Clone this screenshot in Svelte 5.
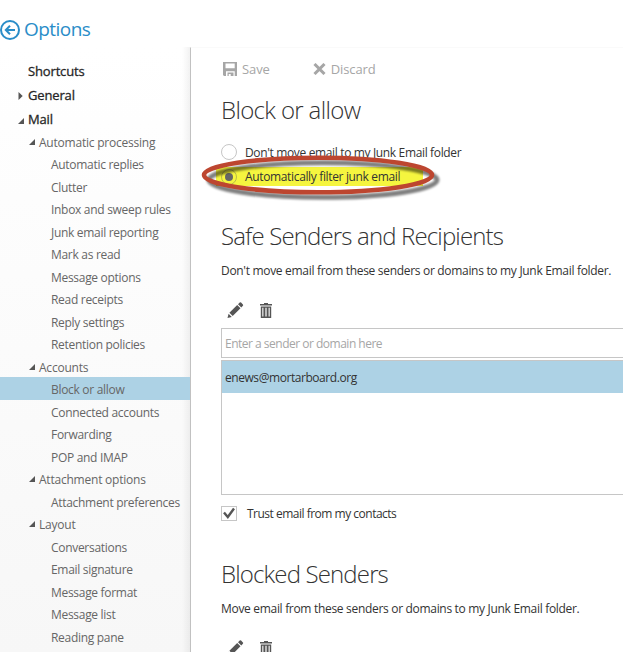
<script lang="ts">
  type Level = 'top' | 'group' | 'item';
  type NavEntry = { label: string; level: Level; arrow?: 'open' | 'closed' };

  const nav: NavEntry[] = [
    { label: 'Shortcuts', level: 'top' },
    { label: 'General', level: 'top', arrow: 'closed' },
    { label: 'Mail', level: 'top', arrow: 'open' },
    { label: 'Automatic processing', level: 'group', arrow: 'open' },
    { label: 'Automatic replies', level: 'item' },
    { label: 'Clutter', level: 'item' },
    { label: 'Inbox and sweep rules', level: 'item' },
    { label: 'Junk email reporting', level: 'item' },
    { label: 'Mark as read', level: 'item' },
    { label: 'Message options', level: 'item' },
    { label: 'Read receipts', level: 'item' },
    { label: 'Reply settings', level: 'item' },
    { label: 'Retention policies', level: 'item' },
    { label: 'Accounts', level: 'group', arrow: 'open' },
    { label: 'Block or allow', level: 'item' },
    { label: 'Connected accounts', level: 'item' },
    { label: 'Forwarding', level: 'item' },
    { label: 'POP and IMAP', level: 'item' },
    { label: 'Attachment options', level: 'group', arrow: 'open' },
    { label: 'Attachment preferences', level: 'item' },
    { label: 'Layout', level: 'group', arrow: 'open' },
    { label: 'Conversations', level: 'item' },
    { label: 'Email signature', level: 'item' },
    { label: 'Message format', level: 'item' },
    { label: 'Message list', level: 'item' },
    { label: 'Reading pane', level: 'item' },
  ];

  let current = $state('Block or allow');
  let filterMode = $state('filter');
  let trustContacts = $state(true);
  let newSender = $state('');

  const safeSenders = ['enews@mortarboard.org'];
</script>

{#snippet editTools()}
  <div class="tools">
    <button aria-label="Edit">
      <svg width="17" height="17" viewBox="0 0 17 17">
        <path d="M0.5 16 L1.6 11.7 L4.8 14.9 Z M2.4 10.8 L10.2 3 L13.5 6.3 L5.7 14.1 Z M11 2.2 L12.7 0.6 Q13.4 0 14.1 0.6 L15.9 2.4 Q16.5 3.1 15.9 3.8 L14.3 5.5 Z" />
      </svg>
    </button>
    <button aria-label="Delete">
      <svg width="12" height="15" viewBox="0 0 12 15">
        <path fill-rule="evenodd" d="M0 1 H4 V0 H8 V1 H12 V2.5 H0 Z M0.8 3.5 H11.2 V15 H0.8 Z M2.3 4.7 V13.5 H3.4 V4.7 Z M5.4 4.7 V13.5 H6.6 V4.7 Z M8.6 4.7 V13.5 H9.7 V4.7 Z" />
      </svg>
    </button>
  </div>
{/snippet}

<div class="page">
  <header>
    <svg class="back" width="20" height="20" viewBox="0 0 20 20">
      <circle cx="10" cy="10" r="9" />
      <path d="M15 10 H6 M10 5.7 L5.8 10 L10 14.3" />
    </svg>
    <span>Options</span>
  </header>

  <div class="body">
    <nav>
      {#each nav as entry (entry.label)}
        <button
          class="entry {entry.level}"
          class:selected={current === entry.label}
          onclick={() => (current = entry.label)}
        >
          <span class="arrow">
            {#if entry.arrow === 'open'}
              <svg width="6" height="6" viewBox="0 0 6 6"><path d="M6 0 V6 H0 Z" /></svg>
            {:else if entry.arrow === 'closed'}
              <svg width="5" height="8" viewBox="0 0 5 8"><path d="M0.5 0 L4.7 4 L0.5 8 Z" /></svg>
            {/if}
          </span>
          <span class="label">{entry.label}</span>
        </button>
      {/each}
    </nav>

    <main>
      <div class="commands">
        <button class="save">
          <svg width="14" height="14" viewBox="0 0 14 14">
            <path fill-rule="evenodd" d="M0 0 H14 V14 H11.7 V9.3 H3 V14 H1 L0 13 Z M2.5 1.5 V6.3 H11.7 V1.5 Z M4.5 10.5 H10.5 V14 H7.7 V12 H5.7 V14 H4.5 Z" />
          </svg>
          Save
        </button>
        <button>
          <svg width="13" height="12" viewBox="0 0 13 12">
            <path class="cross" d="M1.5 1 L11.5 11 M11.5 1 L1.5 11" />
          </svg>
          Discard
        </button>
      </div>

      <h2>Block or allow</h2>
      <div class="choices">
        <label class="choice">
          <input type="radio" bind:group={filterMode} value="none" />
          <span class="dot"></span>
          <span class="text">Don't move email to my Junk Email folder</span>
        </label>
        <label class="choice marked">
          <input type="radio" bind:group={filterMode} value="filter" />
          <span class="dot"></span>
          <span class="text">Automatically filter junk email</span>
        </label>
        <svg class="ring" width="250" height="56" viewBox="0 0 250 56">
          <defs>
            <filter id="soft" x="-10%" y="-30%" width="120%" height="160%">
              <feGaussianBlur stdDeviation="1.3" />
            </filter>
          </defs>
          <ellipse class="shade" cx="123" cy="28" rx="114" ry="17.3" filter="url(#soft)" />
          <ellipse class="line" cx="118" cy="23" rx="114" ry="17.3" />
        </svg>
      </div>

      <h2 class="safe">Safe Senders and Recipients</h2>
      <p>Don't move email from these senders or domains to my Junk Email folder.</p>
      {@render editTools()}
      <input class="sender" placeholder="Enter a sender or domain here" bind:value={newSender} />
      <ul>
        {#each safeSenders as sender}
          <li>{sender}</li>
        {/each}
      </ul>
      <label class="trust">
        <input type="checkbox" bind:checked={trustContacts} />
        <span class="box">
          {#if trustContacts}
            <svg width="12" height="12" viewBox="0 0 12 12"><path d="M1 5.5 L4.8 10 L11 1.5" /></svg>
          {/if}
        </span>
        <span class="text">Trust email from my contacts</span>
      </label>

      <h2 class="blocked">Blocked Senders</h2>
      <p>Move email from these senders or domains to my Junk Email folder.</p>
      {@render editTools()}
    </main>
  </div>
</div>

<style>
  :global(body) {
    overflow: hidden;
    background: #fff;
  }

  .page {
    width: 623px;
    height: 652px;
    overflow: hidden;
    display: flex;
    flex-direction: column;
    font-family: 'Open Sans', 'Noto Sans', sans-serif;
    font-size: 12px;
    color: #333;
  }

  button {
    padding: 0;
    border: 0;
    background: none;
    font: inherit;
    color: inherit;
    text-align: left;
  }

  header {
    flex: none;
    height: 47px;
    box-sizing: border-box;
    padding-top: 15px;
    display: flex;
    align-items: flex-start;
    gap: 4px;
    color: #2a8dc8;
    font-size: 19px;
    line-height: 28px;
    letter-spacing: -0.55px;
  }

  .back {
    margin-top: 5px;
    fill: none;
    stroke: #2a8dc8;
    stroke-width: 2;
  }

  .body {
    flex: 1;
    min-height: 0;
    display: flex;
  }

  nav {
    width: 190px;
    flex: none;
    padding-top: 9.6px;
    box-sizing: border-box;
    background:
      linear-gradient(to left, rgba(0, 0, 0, 0.05), transparent 8px),
      linear-gradient(#fff, #f7f7f7);
    overflow: hidden;
  }

  .entry {
    display: flex;
    width: 100%;
    height: 22.5px;
    line-height: 26px;
    color: #666;
    letter-spacing: -0.3px;
  }

  .group {
    letter-spacing: -0.22px;
  }

  .top {
    height: 24.4px;
    line-height: 28px;
    font-size: 13px;
    color: #262626;
    letter-spacing: -0.15px;
    -webkit-text-stroke: 0.3px #262626;
  }

  .selected {
    background: #add2e5;
  }

  .arrow {
    flex: none;
    width: 39px;
    box-sizing: border-box;
    padding-left: 29px;
    fill: #555;
  }

  .top .arrow {
    width: 28px;
    padding-left: 18px;
  }

  .item .arrow {
    width: 51px;
  }

  .arrow svg {
    vertical-align: 2px;
  }

  .top .arrow svg {
    vertical-align: 0;
  }

  .label {
    white-space: nowrap;
  }

  main {
    flex: 1;
    min-width: 0;
    padding: 11px 0 0 30px;
    border-top: 1px solid #fafafa;
    border-left: 1px solid #c1c1c1;
    box-sizing: border-box;
    white-space: nowrap;
  }

  .commands {
    display: flex;
    gap: 43px;
    height: 20px;
    font-size: 13px;
    color: #a6a6a6;
    padding-left: 2px;
  }

  .commands button {
    display: flex;
    align-items: center;
    gap: 5px;
    letter-spacing: -0.1px;
  }

  .commands svg {
    fill: #a6a6a6;
  }

  .cross {
    stroke: #a6a6a6;
    stroke-width: 3;
  }

  h2 {
    margin: 14px 0 0;
    font-size: 24px;
    line-height: 34px;
    font-weight: 300;
    letter-spacing: -0.85px;
    color: #333;
  }

  .commands + h2 {
    letter-spacing: -0.65px;
  }

  .choices {
    position: relative;
    margin-top: 13px;
  }

  .choice {
    display: flex;
    align-items: center;
    height: 24px;
  }

  input[type='radio'],
  input[type='checkbox'] {
    display: none;
  }

  .dot {
    width: 14px;
    height: 14px;
    border: 1px solid #c6c6c6;
    border-radius: 50%;
    margin-right: 8px;
    display: grid;
    place-items: center;
  }

  input:checked + .dot::after {
    content: '';
    width: 8px;
    height: 8px;
    border-radius: 50%;
    background: #666;
  }

  .marked {
    width: 207px;
    height: 19px;
    margin: 3px 0 0 -5px;
    padding-left: 5px;
    box-sizing: border-box;
    background: #f5f53f;
  }

  .marked .dot {
    border-color: #b9b94a;
  }

  .choice .text {
    letter-spacing: -0.35px;
  }

  .trust .text {
    letter-spacing: -0.5px;
  }

  .ring {
    position: absolute;
    left: -21px;
    top: 12px;
    fill: none;
    pointer-events: none;
  }

  .line {
    stroke: #bd4630;
    stroke-width: 4.6;
  }

  .shade {
    stroke: rgba(0, 0, 0, 0.5);
    stroke-width: 5;
  }

  .safe {
    margin-top: 33px;
  }

  p {
    margin: 9px 0 0;
    line-height: 18px;
    letter-spacing: -0.31px;
  }

  .tools {
    display: flex;
    align-items: center;
    gap: 16px;
    height: 17px;
    margin: 22px 0 0 6px;
    fill: #555;
  }

  .tools button {
    display: flex;
  }

  .sender {
    display: block;
    width: 420px;
    height: 30px;
    box-sizing: border-box;
    margin-top: 9px;
    padding: 0 3px;
    border: 1px solid #c6c6c6;
    font: inherit;
    letter-spacing: -0.5px;
  }

  .sender::placeholder {
    color: #a6a6a6;
  }

  ul {
    width: 420px;
    height: 135px;
    box-sizing: border-box;
    margin: 2px 0 0;
    padding: 0;
    list-style: none;
    border: 1px solid #c6c6c6;
  }

  li {
    height: 32px;
    line-height: 34px;
    padding-left: 3px;
    letter-spacing: -0.44px;
    background: #add2e5;
  }

  .trust {
    display: flex;
    align-items: center;
    height: 16px;
    margin-top: 10px;
  }

  .box {
    width: 14px;
    height: 13px;
    border: 1px solid #c6c6c6;
    margin-right: 10px;
    display: grid;
    place-items: center;
  }

  .box svg {
    fill: none;
    stroke: #555;
    stroke-width: 2.4;
  }

  .blocked {
    margin-top: 36px;
  }
</style>
